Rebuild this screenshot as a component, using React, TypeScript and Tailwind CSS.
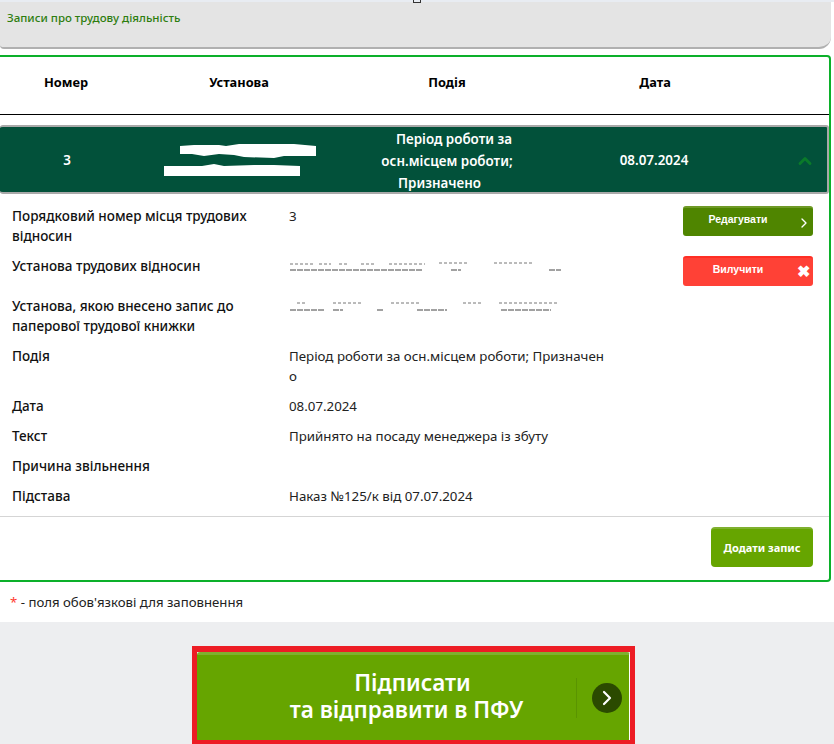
import React from 'react';
import { ChevronRight, ChevronUp } from 'lucide-react';

const font = "font-['Noto_Sans',sans-serif]";

const Redacted = () => (
  <svg width="152" height="33" viewBox="0 0 152 33" className="block">
    <path d="M16 2l14-1h25l7 1 13-2h55l22 2v10h-32l-10 2-30-1-10-2-15-1-15 2-12-2H16z" fill="#fff" />
    <path d="M0 22h38l12-2 10 2 30-1h20l26 1v10H0z" fill="#fff" />
  </svg>
);

const Scribble = ({ low, high }: { low: string; high: string }) => (
  <svg width="275" height="14" viewBox="0 0 275 14" className="mt-[4px] block">
    <path d={low} stroke="#444" strokeWidth="1" strokeDasharray="6 1" fill="none" />
    <path d={high} stroke="#777" strokeWidth="1" strokeDasharray="3 2" fill="none" />
  </svg>
);

type Row = {
  label: React.ReactNode;
  value?: React.ReactNode;
  action?: React.ReactNode;
};

const rows: Row[] = [
  {
    label: 'Порядковий номер місця трудових відносин',
    value: '3',
    action: (
      <button className="relative h-[30px] w-[130px] rounded-[3px] border-t-2 border-[#6f9a26] bg-[#4f8500] font-['Liberation_Sans',sans-serif] text-[10.5px] font-bold text-white">
        <span className="relative -top-[3px] -left-[10px]">Редагувати</span>
        <ChevronRight className="absolute right-[1px] top-[7px] h-4 w-4" strokeWidth={2} />
      </button>
    ),
  },
  {
    label: 'Установа трудових відносин',
    value: (
      <Scribble
        low="M1 10h132M162 10h10M260 10h12"
        high="M1 4h24M30 4h12M50 4h8M72 4h14M100 4h36M150 3h30M205 3h40"
      />
    ),
    action: (
      <button className="relative h-[30px] w-[130px] rounded-[3px] border-t-2 border-[#ff2f25] bg-[#ff4136] font-['Liberation_Sans',sans-serif] text-[10.5px] font-bold text-white">
        <span className="relative -top-[3px] -left-[10px]">Вилучити</span>
        <span className="absolute right-[3px] top-[4px] text-[16px] leading-[20px]">✖</span>
      </button>
    ),
  },
  {
    label: 'Установа, якою внесено запис до паперової трудової книжки',
    value: (
      <Scribble
        low="M1 10h34M44 10h10M88 10h6M128 10h30M212 10h50"
        high="M8 3h8M44 3h30M102 3h30M174 3h20M210 3h60"
      />
    ),
  },
  { label: 'Подія', value: 'Період роботи за осн.місцем роботи; Призначено' },
  { label: 'Дата', value: '08.07.2024' },
  { label: 'Текст', value: 'Прийнято на посаду менеджера із збуту' },
  { label: 'Причина звільнення' },
  { label: 'Підстава', value: 'Наказ №125/к від 07.07.2024' },
];

export default function App() {
  return (
    <div className={`${font} relative h-[744px] w-[834px] overflow-hidden bg-white`}>
      <div className="absolute left-[413px] top-0 h-[3px] w-[8px] border-x border-b border-[#333]" />
      <div className="h-[2px] bg-[#e8ecf2]" />

      <div className="mr-[3px] h-[47px] rounded-bl-[4px] rounded-br-[12px] border-b-2 border-[#b0b0b0] bg-[#e4e4e4] pl-[7px] pt-[8px] text-[11.5px] font-medium leading-[16px] text-[#2d7d0f]">
        Записи про трудову діяльність
      </div>

      <div className="mt-[6px] mr-[3px] h-[527px] rounded-r-[4px] border-y-2 border-r-2 border-[#0cb02a]">
        <div className="flex h-[58px] border-b border-black pb-[6px] text-[12.8px] font-bold text-black">
          <div className="flex w-[132px] items-center justify-center">Номер</div>
          <div className="flex w-[214px] items-center justify-center">Установа</div>
          <div className="flex w-[202px] items-center justify-center">Подія</div>
          <div className="flex w-[214px] items-center justify-center">Дата</div>
        </div>

        <div className="mt-[10px] flex h-[69px] rounded-[3px] border-2 border-l-0 border-[#a9a9a9] bg-[#02513a] pt-[2px] text-[13.4px] font-semibold text-white">
          <div className="flex w-[134px] items-center justify-center">3</div>
          <div className="flex w-[212px] items-center justify-center">
            <Redacted />
          </div>
          <div className="flex w-[216px] flex-col items-center justify-center text-center leading-[22px]">
            <span className="block">Період роботи за</span>
            <span className="block pr-[14px]">осн.місцем роботи;</span>
            <span className="block pr-[29px]">Призначено</span>
          </div>
          <div className="flex w-[184px] items-center justify-center">08.07.2024</div>
          <div className="flex flex-1 items-center justify-center pl-[36px]">
            <ChevronUp className="h-5 w-5 text-[#0a7a2a]" strokeWidth={3.5} />
          </div>
        </div>

        <div className="h-[322px] pt-[12px] text-[13.3px] leading-[20px] text-[#222]">
          {rows.map((row, i) => (
            <div key={i} className="flex pb-[10px]">
              <div className="w-[289px] shrink-0 pl-[12px] pr-[30px] text-[13.5px] font-medium text-[#111]">{row.label}</div>
              <div className="w-[320px] shrink-0 break-all">{row.value}</div>
              {row.action && <div className="ml-[74px]">{row.action}</div>}
            </div>
          ))}
        </div>

        <div className="flex justify-end border-t border-[#d5d5d5] pr-[16px] pt-[10px]">
          <button className="h-[40px] w-[102px] rounded-[4px] border-t-2 border-[#7fb02f] bg-[#66a500] text-[11px] font-bold text-white">
            Додати запис
          </button>
        </div>
      </div>

      <div className="h-[40px] pl-[10px] pt-[11px] text-[13.2px] leading-[18px] text-[#222]">
        <span className="text-[#ff3b30]">*</span> - поля обов'язкові для заповнення
      </div>

      <div className="flex h-[122px] justify-center bg-[#edeef0] pr-[8px] pt-[24px]">
        <div className="h-[98px] w-[443px] border-[5px] border-b-[4px] border-t-[6px] border-[#ed1c24]">
          <button className="flex h-[88px] w-full items-center rounded-t-[3px] border-r border-t-[3px] border-r-white border-t-[#7fb02f] bg-[#66a500] text-white">
            <span className="w-[379px] pb-[3px] pl-[53px] text-center text-[22.5px] font-semibold leading-[27px]">
              <span className="block">Підписати</span>
              <span className="block pr-[12px]">та відправити в ПФУ</span>
            </span>
            <span className="h-[40px] w-px bg-[#5a9400]" />
            <span className="ml-[15px] flex h-[30px] w-[30px] items-center justify-center rounded-full bg-[#2b4a00]">
              <ChevronRight className="h-6 w-6" strokeWidth={2.2} />
            </span>
          </button>
        </div>
      </div>
    </div>
  );
}
